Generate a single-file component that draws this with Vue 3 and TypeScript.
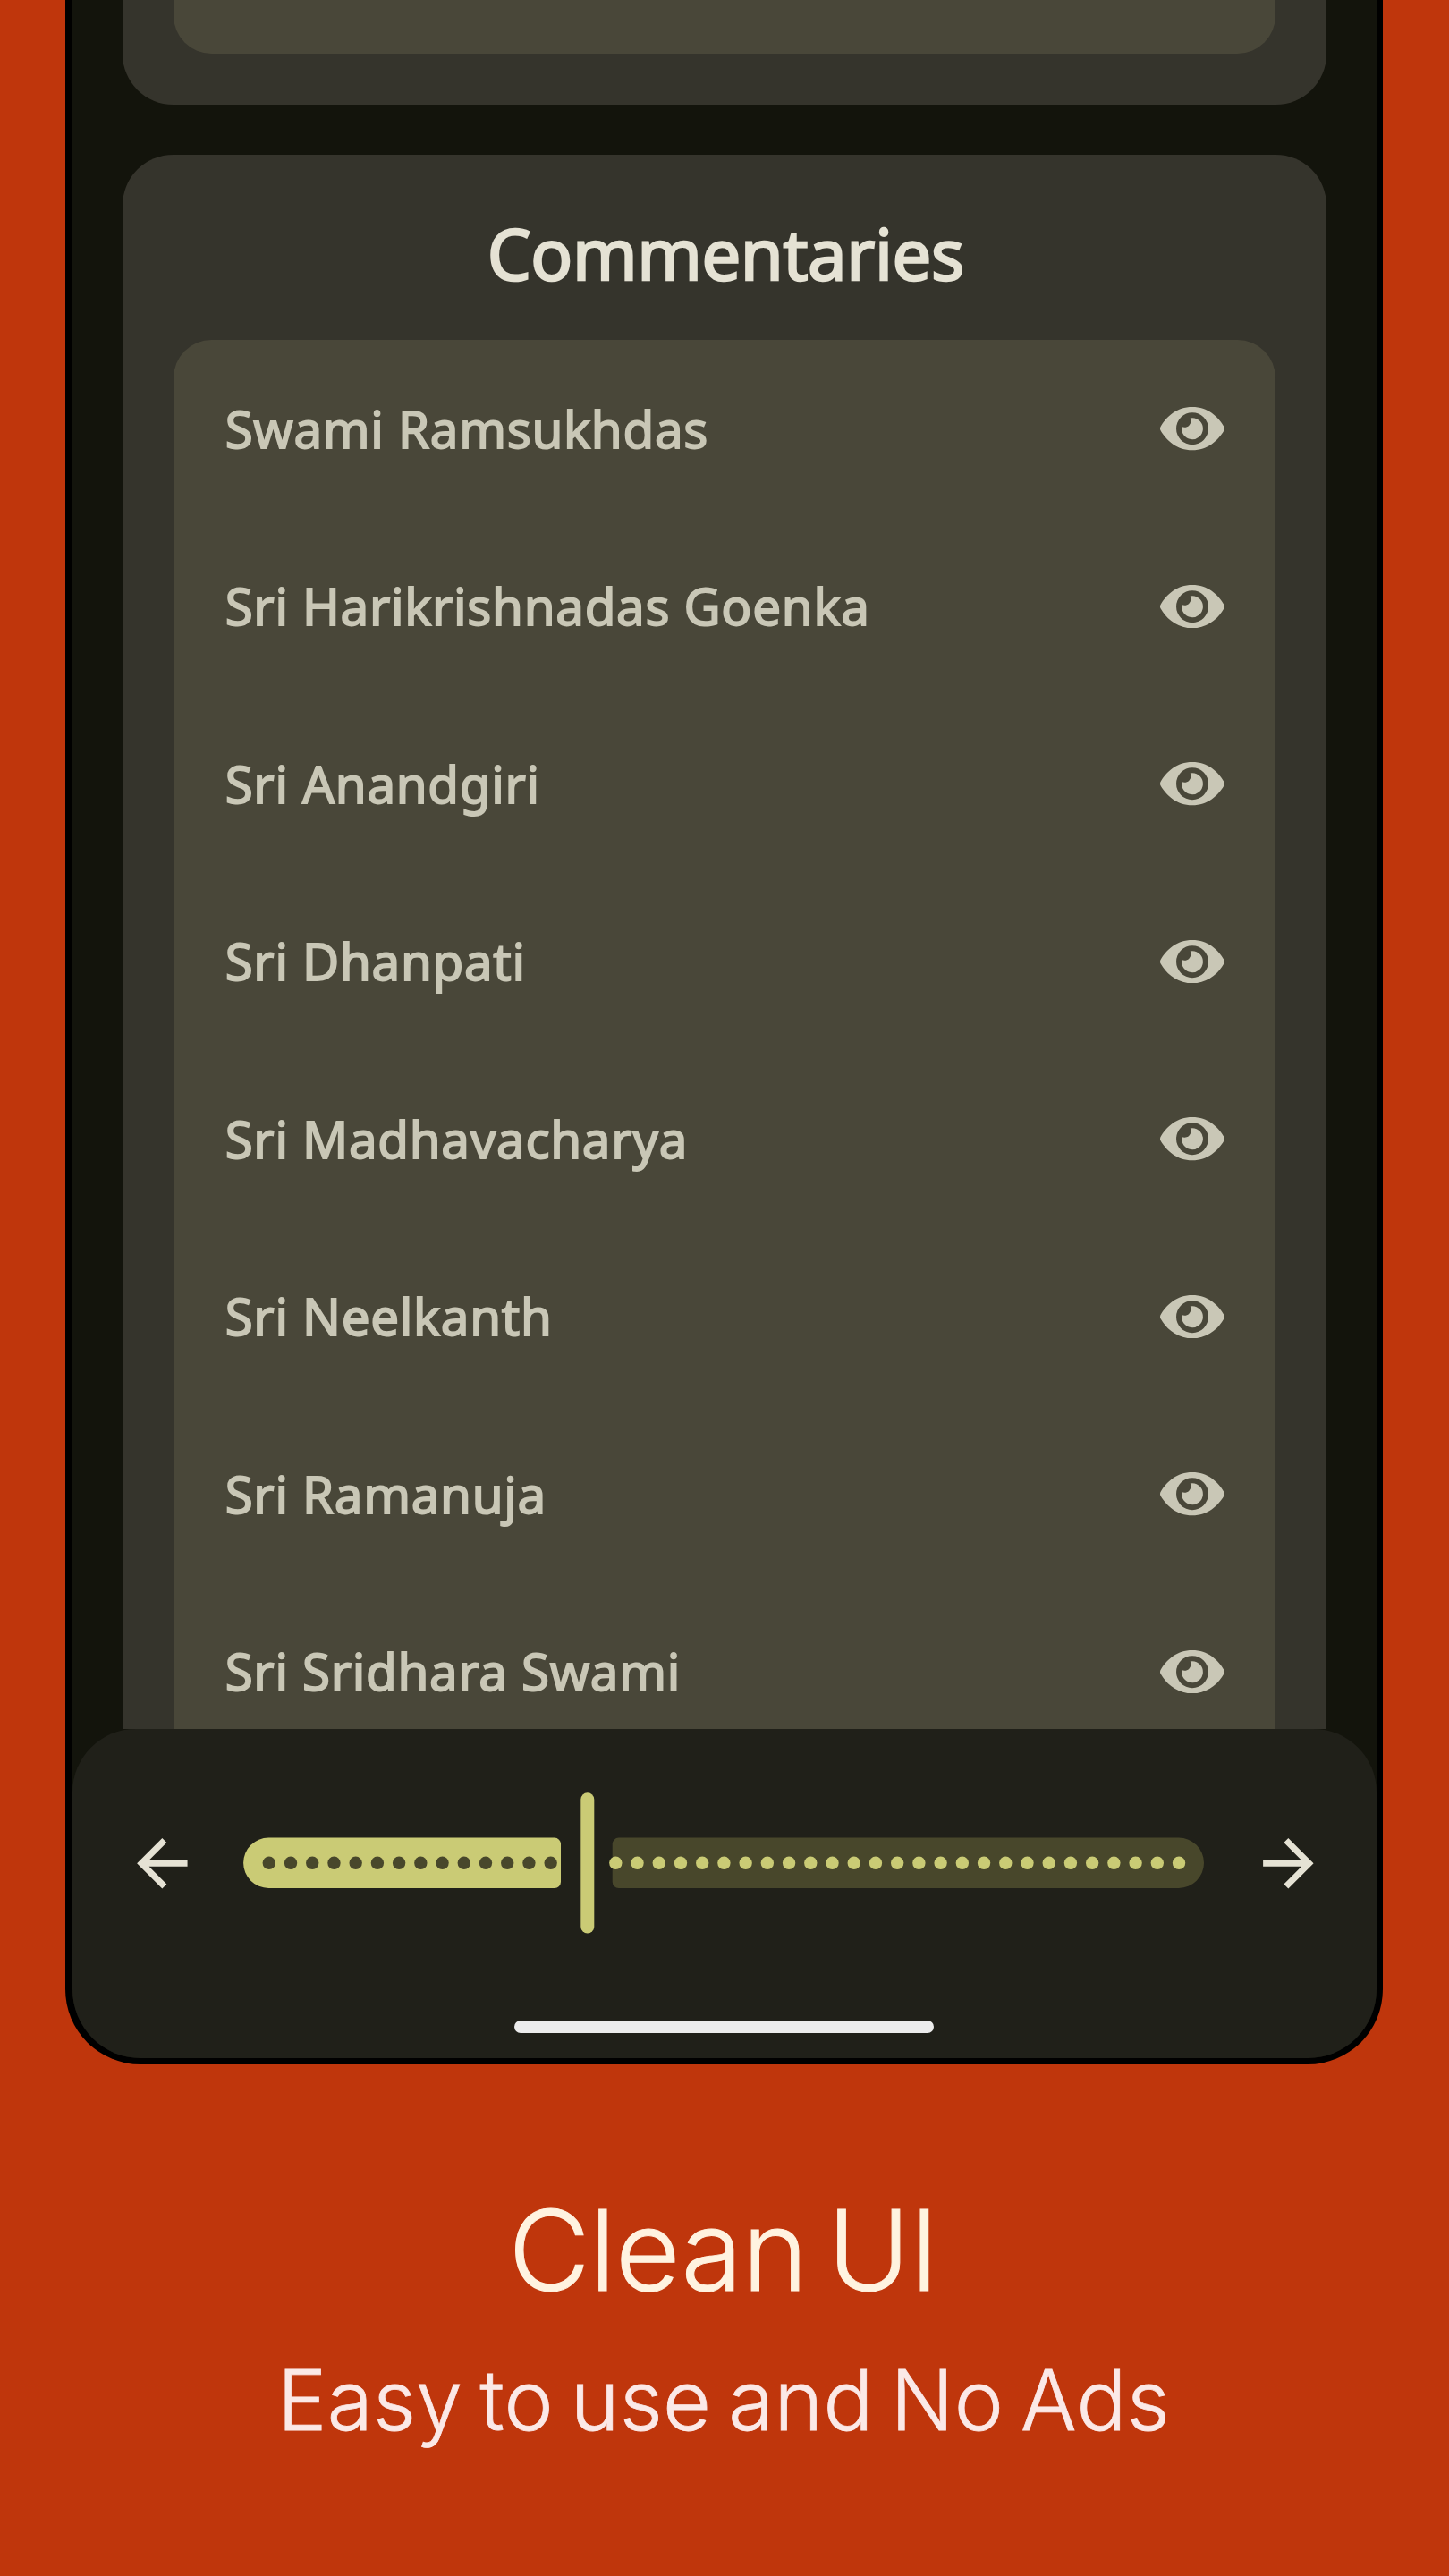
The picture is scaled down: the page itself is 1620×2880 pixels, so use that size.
<script setup lang="ts">
interface Dot {
  x: number
}

const commentators: string[] = [
  'Swami Ramsukhdas',
  'Sri Harikrishnadas Goenka',
  'Sri Anandgiri',
  'Sri Dhanpati',
  'Sri Madhavacharya',
  'Sri Neelkanth',
  'Sri Ramanuja',
  'Sri Sridhara Swami',
]

const step = 24.22
const makeDots = (from: number, to: number): Dot[] =>
  Array.from({ length: to - from + 1 }, (_, i) => ({ x: 28.8 + (from + i) * step }))

const activeDots = makeDots(0, 13)
const inactiveDots = makeDots(16, 42)
</script>

<template>
  <main class="stage">
    <section class="phone">
      <div class="scroll">
        <div class="card card-prev"><div class="panel panel-prev"></div></div>
        <div class="card card-main">
          <h2 class="card-title">Commentaries</h2>
          <ul class="panel list">
            <li v-for="name in commentators" :key="name" class="row">
              <span class="name">{{ name }}</span>
              <svg class="eye" viewBox="0 0 73 49" aria-hidden="true">
                <path
                  fill-rule="evenodd"
                  d="M36.5 0C54 0 66 11 72.6 22.6Q73.4 24.5 72.6 26.4C66 38 54 49 36.5 49C19 49 7 38 .4 26.4Q-.4 24.5 .4 22.6C7 11 19 0 36.5 0ZM36.5 6.3A18.2 18.2 0 1 0 36.5 42.7A18.2 18.2 0 1 0 36.5 6.3Z"
                />
                <path
                  d="M36.5 12.4A12.1 12.1 0 1 1 24.6 22.2C27 23.6 30.5 23.2 32.8 20.9C35.1 18.6 35.6 15.1 34.2 12.6Q35.3 12.4 36.5 12.4Z"
                />
              </svg>
            </li>
          </ul>
        </div>
      </div>

      <footer class="bar">
        <div class="controls">
          <svg class="arrow" viewBox="0 0 24 24" aria-hidden="true">
            <path d="M20 11H7.83l5.59-5.59L12 4l-8 8 8 8 1.41-1.41L7.83 13H20v-2z" />
          </svg>
          <svg class="slider" viewBox="0 0 1074 158" aria-hidden="true">
            <path
              class="on"
              d="M28.3 50.6H348a7 7 0 0 1 7 7V100a7 7 0 0 1-7 7H28.3a28.2 28.2 0 0 1 0-56.4Z"
            />
            <path
              class="off"
              d="M419.7 50.6H1045.8a28.2 28.2 0 0 1 0 56.4H419.7a7 7 0 0 1-7-7V57.6a7 7 0 0 1 7-7Z"
            />
            <circle v-for="d in activeDots" :key="d.x" class="off" :cx="d.x" cy="78.8" r="7.2" />
            <circle v-for="d in inactiveDots" :key="d.x" class="on" :cx="d.x" cy="78.8" r="7.2" />
            <rect class="on" x="377.3" y="0.2" width="15" height="157.2" rx="7.5" />
          </svg>
          <svg class="arrow" viewBox="0 0 24 24" aria-hidden="true">
            <path d="M12 4l-1.41 1.41L16.17 11H4v2h12.17l-5.58 5.59L12 20l8-8z" />
          </svg>
        </div>
        <div class="home"></div>
      </footer>
    </section>

    <section class="caption">
      <h1 class="headline">Clean UI</h1>
      <p class="tagline">Easy to use and No Ads</p>
    </section>
  </main>
</template>

<style>
body {
  margin: 0;
  background: #bf360c;
}
</style>

<style scoped>
.stage {
  box-sizing: border-box;
  width: 1620px;
  height: 2880px;
  overflow: hidden;
  background: #bf360c;
  display: flex;
  flex-direction: column;
}
.phone {
  box-sizing: border-box;
  width: 1473px;
  height: 2308px;
  flex: none;
  margin-left: 73px;
  border: solid #000;
  border-width: 0 7px 7px 8px;
  border-radius: 0 0 84px 84px;
  background: #13140c;
  overflow: hidden;
  display: flex;
  flex-direction: column;
}
.scroll {
  height: 1932.7px;
  flex: none;
  overflow: hidden;
  padding: 0 56px 0 56.4px;
}
.card {
  background: #35342c;
  border-radius: 56.5px;
  padding: 0 57px 0 56.7px;
}
.card-prev {
  height: 116.5px;
  border-top-left-radius: 0;
  border-top-right-radius: 0;
}
.panel {
  background: #494739;
  border-radius: 42.4px;
}
.panel-prev {
  height: 60px;
  border-top-left-radius: 0;
  border-top-right-radius: 0;
}
.card-main {
  margin-top: 56.7px;
  height: 1900px;
}
.card-title {
  margin: 0;
  height: 206.9px;
  box-sizing: border-box;
  padding-left: 2.4px;
  font: 400 77.7px/221px 'Noto Sans', sans-serif;
  letter-spacing: -0.4px;
  text-align: center;
  color: #e5e2d4;
  -webkit-text-stroke: 2.4px #e5e2d4;
}
.list {
  margin: 0;
  padding: 0 56.8px 0 57.6px;
  height: 1750px;
  list-style: none;
}
.row {
  height: 198.5px;
  display: flex;
  align-items: center;
  justify-content: space-between;
}
.name {
  padding-top: 1px;
  font: 400 56.5px/80px 'Noto Sans', sans-serif;
  letter-spacing: 0.68px;
  color: #c9c7b6;
  -webkit-text-stroke: 1.8px #c9c7b6;
  white-space: nowrap;
}
.eye {
  width: 72px;
  height: 48.4px;
  flex: none;
  fill: #c9c7b6;
}
.bar {
  flex: 1;
  background: #202019;
  border-radius: 70.6px 70.6px 0 0;
  display: flex;
  flex-direction: column;
  align-items: center;
}
.controls {
  align-self: stretch;
  margin-top: 71.5px;
  height: 158px;
  padding: 0 56.5px 0 58.3px;
  display: flex;
  align-items: center;
  justify-content: space-between;
}
.arrow {
  width: 84.7px;
  height: 84.7px;
  flex: none;
  fill: #e5e2d4;
}
.slider {
  width: 1074px;
  height: 158px;
  flex: none;
  margin-right: 3.6px;
}
.on {
  fill: #cacb75;
}
.off {
  fill: #48472b;
}
.home {
  width: 469px;
  height: 14.6px;
  margin: 96.6px 1.4px 0 0;
  border-radius: 7.3px;
  background: #ececec;
}
.caption {
  padding: 127.5px 2px 0 0;
  text-align: center;
  font-family: Inter, sans-serif;
  font-weight: 300;
}
.headline {
  margin: 0;
  font-size: 125px;
  line-height: 160px;
  font-weight: 300;
  letter-spacing: -0.3px;
  word-spacing: -12.5px;
  color: #fff3e0;
  -webkit-text-stroke: 1px #fff3e0;
}
.tagline {
  margin: 27.6px 0 0;
  font-size: 93px;
  line-height: 120px;
  letter-spacing: 0.3px;
  word-spacing: -7.6px;
  color: #fbe9e7;
  -webkit-text-stroke: 0.8px #fbe9e7;
}
</style>
